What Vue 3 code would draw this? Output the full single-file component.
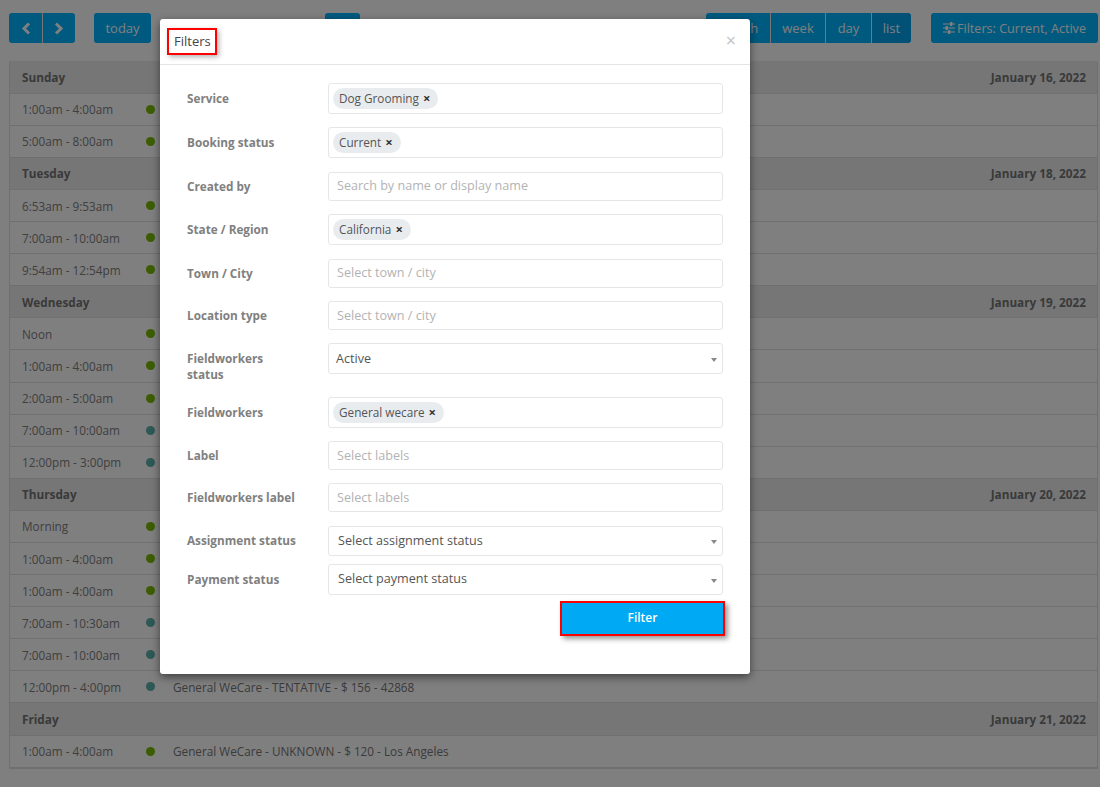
<script setup>
const groups = [
  { day: 'Sunday', date: 'January 16, 2022', rows: [['1:00am - 4:00am', 'g'], ['5:00am - 8:00am', 'g']] },
  { day: 'Tuesday', date: 'January 18, 2022', rows: [['6:53am - 9:53am', 'g'], ['7:00am - 10:00am', 'g'], ['9:54am - 12:54pm', 'g']] },
  { day: 'Wednesday', date: 'January 19, 2022', rows: [['Noon', 'g'], ['1:00am - 4:00am', 'g'], ['2:00am - 5:00am', 'g'], ['7:00am - 10:00am', 't'], ['12:00pm - 3:00pm', 't']] },
  { day: 'Thursday', date: 'January 20, 2022', rows: [['Morning', 'g'], ['1:00am - 4:00am', 'g'], ['1:00am - 4:00am', 'g'], ['7:00am - 10:30am', 't'], ['7:00am - 10:00am', 't'], ['12:00pm - 4:00pm', 't', 'General WeCare - TENTATIVE - $ 156 - 42868']] },
  { day: 'Friday', date: 'January 21, 2022', rows: [['1:00am - 4:00am', 'g', 'General WeCare - UNKNOWN - $ 120 - Los Angeles']] },
]
const fields = [
  { label: 'Service', chip: 'Dog Grooming', h: 'h31', g: 'g13' },
  { label: 'Booking status', chip: 'Current', h: 'h31', g: 'g14' },
  { label: 'Created by', ph: 'Search by name or display name', h: 'h29', g: 'g13' },
  { label: 'State / Region', chip: 'California', h: 'h31', g: 'g14' },
  { label: 'Town / City', ph: 'Select town / city', h: 'h29', g: 'g13' },
  { label: 'Location type', ph: 'Select town / city', h: 'h29', g: 'g13', low: true },
  { label: 'Fieldworkers status', sel: 'Active', h: 'h31', g: 'g15', top: true },
  { label: 'Fieldworkers', chip: 'General wecare', h: 'h31', g: 'g13' },
  { label: 'Label', ph: 'Select labels', h: 'h29', g: 'g13', low: true },
  { label: 'Fieldworkers label', ph: 'Select labels', h: 'h29', g: 'g14', low: true },
  { label: 'Assignment status', sel: 'Select assignment status', h: 'h30', g: 'g8' },
  { label: 'Payment status', sel: 'Select payment status', h: 'h31', g: 'g6' },
]
</script>

<template>
  <div class="page">
    <div class="toolbar">
      <div class="btn-group">
        <button class="btn icon-btn"><svg width="10" height="13" viewBox="0 0 10 13"><path d="M8 1.5 3 6.5l5 5" fill="none" stroke="currentColor" stroke-width="3"/></svg></button>
        <button class="btn icon-btn"><svg width="10" height="13" viewBox="0 0 10 13"><path d="m2 1.5 5 5-5 5" fill="none" stroke="currentColor" stroke-width="3"/></svg></button>
      </div>
      <button class="btn today">today</button>
      <button class="btn center-btn"></button>
      <div class="btn-group views">
        <button class="btn v-month">month</button>
        <button class="btn v-week">week</button>
        <button class="btn v-day">day</button>
        <button class="btn v-list active">list</button>
      </div>
      <button class="btn filters">
        <svg width="12" height="12" viewBox="0 0 12 12"><g fill="none" stroke="currentColor" stroke-width="1.2"><path d="M0 2h12M0 6h12M0 10h12"/></g><g fill="currentColor"><rect x="7" y="0" width="2.4" height="4" rx=".6"/><rect x="2.5" y="4" width="2.4" height="4" rx=".6"/><rect x="5" y="8" width="2.4" height="4" rx=".6"/></g></svg>
        Filters: Current, Active
      </button>
    </div>

    <div class="agenda">
      <template v-for="group in groups" :key="group.date">
        <div class="heading"><span>{{ group.day }}</span><span>{{ group.date }}</span></div>
        <div v-for="(row, i) in group.rows" :key="i" class="row">
          <span class="time">{{ row[0] }}</span>
          <span class="dot" :class="row[1]"></span>
          <span class="title">{{ row[2] }}</span>
        </div>
      </template>
    </div>

    <div class="backdrop"></div>

    <div class="modal">
      <div class="modal-head">
        <span class="modal-title">Filters</span>
        <span class="close">×</span>
      </div>
      <div class="modal-body">
        <div v-for="f in fields" :key="f.label" class="field" :class="[f.g, { top: f.top }]">
          <label class="field-label">{{ f.label }}</label>
          <div class="control" :class="f.h">
            <span v-if="f.chip" class="chip">{{ f.chip }}<span class="chip-x">×</span></span>
            <span v-else-if="f.ph" class="placeholder" :class="{ low: f.low }">{{ f.ph }}</span>
            <template v-else>
              <span class="value" :class="{ flush: f.top }">{{ f.sel }}</span>
              <span class="caret"></span>
            </template>
          </div>
        </div>
        <div class="actions">
          <button class="filter-btn">Filter</button>
        </div>
      </div>
    </div>
  </div>
</template>

<style scoped>
.page {
  position: relative;
  width: 1100px;
  height: 787px;
  overflow: hidden;
  background: #fff;
  font-family: "Open Sans", "Liberation Sans", sans-serif;
  font-size: 11.75px;
  color: #777;
}
.toolbar {
  display: flex;
  align-items: flex-start;
  padding: 13px 2px 0 9px;
  height: 60.6px;
  box-sizing: border-box;
}
.btn {
  height: 30px;
  border: 0;
  padding: 0;
  background: #00b4ff;
  color: #fff;
  font: 13px "Open Sans", sans-serif;
  border-radius: 3px;
  display: flex;
  align-items: center;
  justify-content: center;
}
.btn-group { display: flex; }
.btn-group .btn { border-radius: 0; border-left: 1px solid #eee; }
.btn-group .btn:first-child { border-left: 0; border-radius: 3px 0 0 3px; }
.btn-group .btn:last-child { border-radius: 0 3px 3px 0; }
.icon-btn { width: 33px; }
.today { width: 57px; margin-left: 19px; }
.center-btn { width: 35px; margin-left: 174px; }
.views { margin-left: 346px; }
.v-month { width: 64px; }
.v-week { width: 55px; }
.v-day { width: 46px; }
.v-list { width: 40px; }
.btn.active { background: #00a2ea; }
.filters { width: 167px; margin-left: 20px; gap: 2px; font-size: 12.6px; }

.agenda {
  margin: 0 2px 0 9px;
  border: 1px solid #e0e0e0;
  border-top: 1px solid #ececec;
  box-sizing: border-box;
}
.heading {
  height: 32.1px;
  box-sizing: border-box;
  display: flex;
  justify-content: space-between;
  align-items: center;
  padding: 0 11px 0 12px;
  background: #ececec;
  border-bottom: 1px solid #e0e0e0;
  font-weight: 700;
  color: #747474;
}
.row {
  height: 32.1px;
  box-sizing: border-box;
  display: flex;
  align-items: center;
  padding-left: 12px;
  border-bottom: 1px solid #e0e0e0;
  color: #808080;
}
.time { width: 124px; }
.dot { width: 9px; height: 9px; border-radius: 50%; margin-right: 18px; }
.dot.g { background: #78b800; }
.dot.t { background: #5ab0a8; }
.title { color: #767676; }

.backdrop {
  position: absolute;
  inset: 0;
  background: rgba(0, 0, 0, .5);
}
.modal {
  position: absolute;
  left: 160px;
  top: 19px;
  width: 590px;
  height: 655px;
  background: #fff;
  border-radius: 3px;
  box-shadow: 0 3px 9px rgba(0, 0, 0, .5);
}
.modal-head {
  height: 46px;
  box-sizing: border-box;
  border-bottom: 1px solid #e5e5e5;
  display: flex;
  align-items: flex-start;
  justify-content: space-between;
  padding: 9px 14px 0 7px;
}
.modal-title {
  border: 2px solid #f00;
  height: 27px;
  width: 50px;
  box-sizing: border-box;
  font-size: 13px;
  line-height: 23px;
  padding-left: 5px;
  color: #444;
  box-shadow: 2px 2px 5px rgba(0, 0, 0, .3);
}
.close { font-size: 18px; line-height: 24px; color: #c4c4c4; }
.modal-body { padding: 18px 27px 0; }
.field { display: flex; align-items: center; }
.field.top { align-items: flex-start; }
.field-label {
  width: 141px;
  padding-bottom: 2px;
  font-weight: 700;
  font-size: 11.75px;
  line-height: 16px;
  color: #808080;
}
.field.top .field-label { padding: 7px 0 0; width: 110px; margin-right: 31px; }
.control {
  width: 395px;
  box-sizing: border-box;
  border: 1px solid #e4e6e8;
  border-radius: 3px;
  display: flex;
  align-items: center;
  padding-left: 4px;
  position: relative;
}
.h29 { height: 29px; }
.h30 { height: 30px; }
.h31 { height: 31px; }
.g6 { margin-bottom: 6px; }
.g8 { margin-bottom: 8px; }
.g13 { margin-bottom: 13px; }
.g14 { margin-bottom: 14px; }
.g15 { margin-bottom: 15px; }
.chip {
  height: 21px;
  box-sizing: border-box;
  border-radius: 11px;
  background: #e9ecef;
  padding: 0 8px 2px 6px;
  display: flex;
  align-items: center;
  color: #555;
  font-size: 11.75px;
}
.chip-x { margin-left: 4px; font-weight: 700; font-size: 13px; color: #333; }
.placeholder { padding: 0 0 2px 4px; color: #b3b3b3; font-size: 12.6px; }
.placeholder.low { padding-bottom: 0; }
.value { padding: 0 0 2px 5px; color: #555; font-size: 12.6px; }
.value.flush { padding: 0 0 0 3px; }
.caret {
  position: absolute;
  right: 5px;
  top: 50%;
  margin-top: -1px;
  border: 3.5px solid transparent;
  border-top: 4px solid #888;
  border-bottom: 0;
}
.actions { display: flex; justify-content: flex-end; margin-right: -2px; }
.filter-btn {
  width: 165px;
  height: 35px;
  box-sizing: border-box;
  border: 2px solid #f00;
  padding: 0 0 2px;
  background: #00a9f4;
  color: #fff;
  font: 600 12px "Open Sans", sans-serif;
  box-shadow: 3px 3px 5px rgba(0, 0, 0, .4);
}
</style>
